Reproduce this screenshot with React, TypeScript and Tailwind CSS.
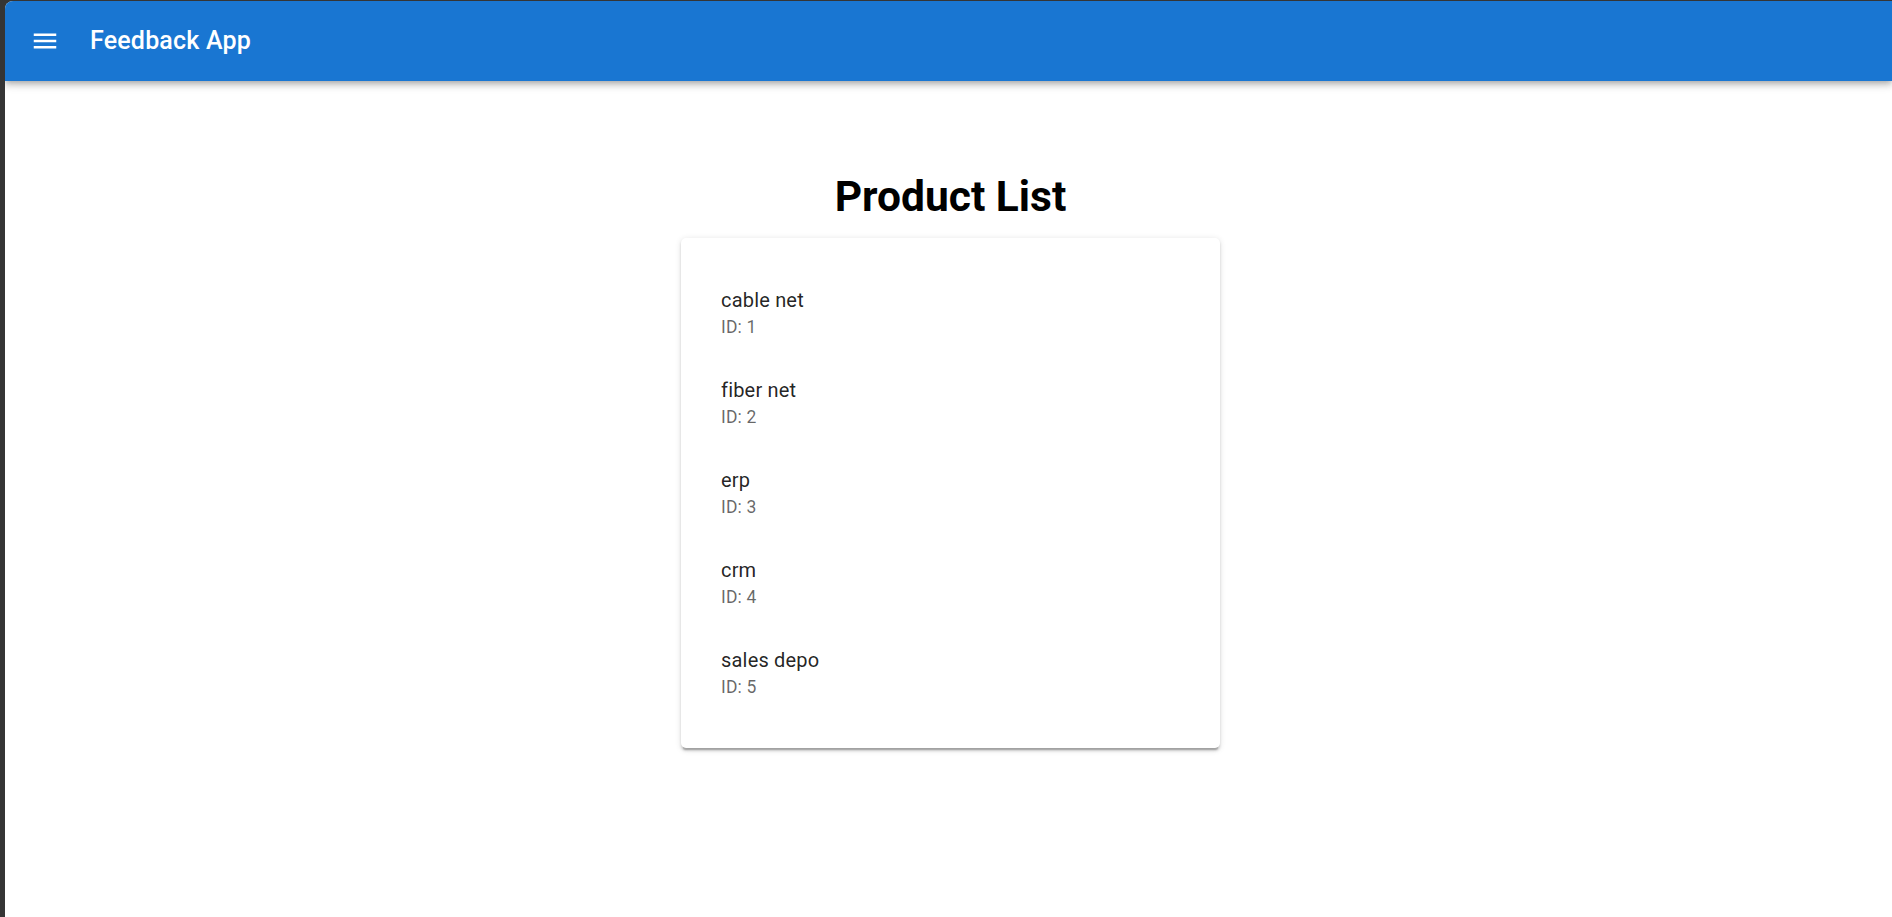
import React from "react";

const products = [
  { id: 1, name: "cable net" },
  { id: 2, name: "fiber net" },
  { id: 3, name: "erp" },
  { id: 4, name: "crm" },
  { id: 5, name: "sales depo" },
];

const MenuIcon = () => (
  <svg viewBox="0 0 24 24" className="w-[30px] h-[30px] fill-white">
    <path d="M3 18h18v-2H3zm0-5h18v-2H3zm0-7v2h18V6z" />
  </svg>
);

export default function App() {
  return (
    <div className="h-[917px] w-full bg-[#353535] pt-px pl-[5px] flex font-['Roboto',sans-serif]">
      <div className="flex-1 bg-white rounded-tl-[8px] overflow-hidden flex flex-col">
        <header className="h-20 shrink-0 bg-[#1976d2] flex items-center pl-[25px] relative z-10 shadow-[0px_2.5px_5px_-1.25px_rgba(0,0,0,0.2),0px_5px_6px_0px_rgba(0,0,0,0.14),0px_1.25px_12.5px_0px_rgba(0,0,0,0.12)]">
          <MenuIcon />
          <h6 className="ml-[30px] text-white text-[25px] font-medium leading-[1.6] tracking-[0.0075em]">
            Feedback App
          </h6>
        </header>
        <main className="flex flex-col items-center pl-[4px]">
          <h1 className="mt-[90px] mb-[14.5px] text-[42.5px] font-bold leading-[1.235] text-black">
            Product List
          </h1>
          <div className="w-[539px] bg-white rounded-[5px] py-[30px] shadow-[0px_3.75px_1.25px_-2.5px_rgba(0,0,0,0.2),0px_2.5px_2.5px_0px_rgba(0,0,0,0.14),0px_1.25px_6.25px_0px_rgba(0,0,0,0.12)]">
            <ul>
              {products.map((p) => (
                <li key={p.id} className="px-[40px] py-[17.5px]">
                  <div className="text-[20px] leading-[30px] tracking-[0.00938em] text-[rgba(0,0,0,0.87)]">
                    {p.name}
                  </div>
                  <div className="text-[17.5px] leading-[25px] tracking-[0.01071em] text-[rgba(0,0,0,0.6)]">
                    ID: {p.id}
                  </div>
                </li>
              ))}
            </ul>
          </div>
        </main>
      </div>
    </div>
  );
}
